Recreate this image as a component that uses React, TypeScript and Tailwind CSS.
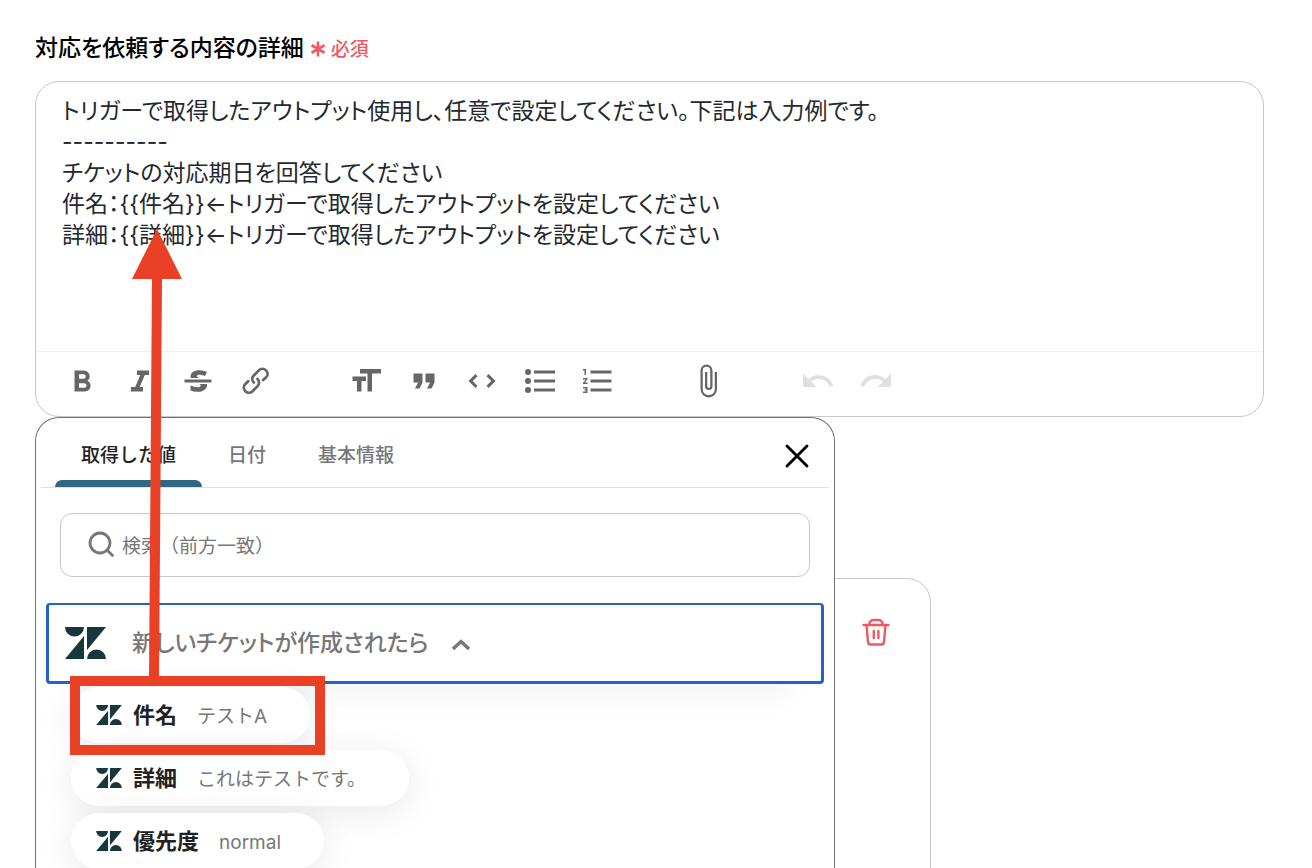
import type { ReactNode } from 'react';
import { X } from 'lucide-react';

interface IconProps {
  className?: string;
}

interface ToolbarItem {
  label: string;
  path: string;
  disabled?: boolean;
}

const toolbarGroups: ToolbarItem[][] = [
  [
    {
      label: '太字',
      path: 'M15.6 11.8c1-.7 1.6-1.8 1.6-2.8a4 4 0 0 0-4-4H7v14h7c2.1 0 3.7-1.7 3.7-3.8 0-1.5-.8-2.8-2.1-3.4zM10 7.5h3a1.5 1.5 0 1 1 0 3h-3v-3zm3.5 9H10v-3h3.5a1.5 1.5 0 1 1 0 3z',
    },
    { label: '斜体', path: 'M10 5v3h2.2l-3.4 8H6v3h8v-3h-2.2l3.4-8H18V5h-8z' },
    {
      label: '取り消し線',
      path: 'M12.73 14l.28.14c.26.15.45.3.57.44.12.14.18.3.18.5 0 .3-.15.56-.44.75-.3.2-.76.3-1.39.3A13.52 13.52 0 0 1 7 14.95v3.37a10.64 10.64 0 0 0 4.84.88c1.26 0 2.35-.19 3.28-.56.93-.37 1.64-.9 2.14-1.57s.74-1.45.74-2.32c0-.26-.02-.51-.06-.75h-5.21zm-5.5-4c-.08-.34-.12-.7-.12-1.1 0-1.29.52-2.3 1.58-3.02 1.05-.72 2.5-1.08 4.34-1.08 1.62 0 3.28.34 4.97 1l-1.3 2.93c-1.47-.6-2.73-.9-3.8-.9-.55 0-.96.08-1.2.26-.26.17-.38.38-.38.64 0 .27.16.52.48.74.17.12.53.3 1.05.53H7.23zM3 13h18v-2H3v2z',
    },
    {
      label: 'リンク',
      path: 'M9.88 13.7a4.3 4.3 0 0 1 0-6.07l3.37-3.37a4.26 4.26 0 0 1 6.07 0 4.3 4.3 0 0 1 0 6.06l-1.96 1.72a.91.91 0 1 1-1.3-1.3l1.97-1.71a2.46 2.46 0 0 0-3.48-3.48l-3.38 3.37a2.46 2.46 0 0 0 0 3.48.91.91 0 1 1-1.3 1.3zM4.25 19.46a4.3 4.3 0 0 1 0-6.07l1.93-1.9a.91.91 0 1 1 1.3 1.3l-1.93 1.9a2.46 2.46 0 0 0 3.48 3.48l3.37-3.38c.96-.96.96-2.52 0-3.48a.91.91 0 1 1 1.3-1.3 4.3 4.3 0 0 1 0 6.07l-3.38 3.38a4.26 4.26 0 0 1-6.07 0z',
    },
  ],
  [
    { label: '見出し', path: 'M12 9v3H9v7H6v-7H3V9h9zM8 4h14v3h-6v12h-3V7H8V4z' },
    { label: '引用', path: 'M6 17h3l2-4V7H5v6h3zm8 0h3l2-4V7h-6v6h3z' },
    {
      label: 'コード',
      path: 'M18.2 12L15 15.2l1.4 1.4L21 12l-4.6-4.6L15 8.8l3.2 3.2zM5.8 12L9 8.8 7.6 7.4 3 12l4.6 4.6L9 15.2 5.8 12z',
    },
    {
      label: '箇条書き',
      path: 'M4 4a2 2 0 1 0 0 4 2 2 0 0 0 0-4zm0 6a2 2 0 1 0 0 4 2 2 0 0 0 0-4zm0 6a2 2 0 1 0 0 4 2 2 0 0 0 0-4zm4 3h14v-2H8v2zm0-6h14v-2H8v2zm0-8v2h14V5H8z',
    },
    {
      label: '番号付きリスト',
      path: 'M2 17h2v.5H3v1h1v.5H2v1h3v-4H2v1zm1-9h1V4H2v1h1v3zm-1 3h1.8L2 13.1v.9h3v-1H3.2L5 10.9V10H2v1zm5-6v2h14V5H7zm0 14h14v-2H7v2zm0-6h14v-2H7v2z',
    },
  ],
  [
    {
      label: 'ファイルを添付',
      path: 'M16.5 6v11.5a4 4 0 1 1-8 0V5a2.5 2.5 0 0 1 5 0v10.5a1 1 0 1 1-2 0V6H10v9.5a2.5 2.5 0 0 0 5 0V5a4 4 0 1 0-8 0v12.5a5.5 5.5 0 0 0 11 0V6h-1.5z',
    },
  ],
  [
    {
      label: '元に戻す',
      path: 'M12.5 8c-2.6 0-5 1-6.9 2.6L2 7v9h9l-3.6-3.6A8 8 0 0 1 20 16l2.4-.8a10.5 10.5 0 0 0-10-7.2z',
      disabled: true,
    },
    {
      label: 'やり直す',
      path: 'M18.4 10.6a10.5 10.5 0 0 0-16.9 4.6L4 16a8 8 0 0 1 12.7-3.6L13 16h9V7l-3.6 3.6z',
      disabled: true,
    },
  ],
];

const tabs = ['取得した値', '日付', '基本情報'];

const outputs = [
  { name: '件名', value: 'テストA' },
  { name: '詳細', value: 'これはテストです。' },
  { name: '優先度', value: 'normal' },
];

const detailText = `トリガーで取得したアウトプット使用し、任意で設定してください。下記は入力例です。
----------
チケットの対応期日を回答してください
件名：{{件名}}←トリガーで取得したアウトプットを設定してください
詳細：{{詳細}}←トリガーで取得したアウトプットを設定してください`;

const ZendeskIcon = ({ className }: IconProps) => (
  <svg viewBox="0 0 41 32" fill="#17373d" className={className} aria-hidden="true">
    <path d="M0 0h19a9.5 9.5 0 0 1-19 0zM19 9v23H0zM22 0h19L22 23zM22 32a9.5 9.5 0 0 1 19 0z" />
  </svg>
);

const TrashIcon = ({ className }: IconProps) => (
  <svg
    viewBox="0 0 28 28"
    fill="none"
    stroke="#ee5a62"
    strokeWidth="2.4"
    strokeLinecap="round"
    strokeLinejoin="round"
    className={className}
    aria-hidden="true">
    <path d="M1.5 7h25M7 7c.5-3 2-5 4.5-5h5c2.5 0 4 2 4.5 5M4.5 7l1.5 17q.3 2.5 2.7 2.5h10.6q2.4 0 2.7-2.5l1.5-17M11.8 13v7M16.4 13v7" />
  </svg>
);

const ToolbarButton = ({ label, path, disabled }: ToolbarItem) => (
  <button
    type="button"
    aria-label={label}
    disabled={disabled}
    className="flex h-12 w-[58px] items-center justify-center text-[#666] disabled:text-[#e0e0e0]">
    <svg viewBox="0 0 24 24" fill="currentColor" className="size-9" aria-hidden="true">
      <path d={path} />
    </svg>
  </button>
);

const Editor = () => (
  <div className="rounded-3xl border border-[#c8c8c8]">
    <textarea
      id="detail"
      defaultValue={detailText}
      className="block h-[269px] w-full resize-none px-[26px] pt-[14px] font-[Inter,'Noto_Sans_CJK_JP',sans-serif] text-[23px] leading-[31px] text-[#24292f] outline-none [font-feature-settings:'palt']"
    />
    <div className="flex gap-[52px] border-t border-[#f0f0f0] px-[17px] pt-[5px] pb-[11px]">
      {toolbarGroups.map((group, i) => (
        <div key={i} className="flex">
          {group.map((item) => (
            <ToolbarButton key={item.label} {...item} />
          ))}
        </div>
      ))}
    </div>
  </div>
);

const Tab = ({ active, children }: { active: boolean; children: ReactNode }) => (
  <button
    type="button"
    role="tab"
    aria-selected={active}
    className="flex flex-col font-medium text-[#777] aria-selected:text-[#222]">
    <span className="flex h-[62px] items-center px-[26px] pt-[10px]">{children}</span>
    {active && <span className="h-[7px] w-full rounded-t-lg bg-[#2f6880]" />}
  </button>
);

const OutputPicker = () => (
  <div className="absolute top-0 left-0 w-[800px] rounded-t-3xl border border-b-0 border-[#707070] bg-white text-[19px]">
    <div className="mx-[5px] flex items-start border-b border-[#e0e0e0] px-[14px]">
      <div role="tablist" className="flex h-[69px]">
        {tabs.map((tab, i) => (
          <Tab key={tab} active={i === 0}>
            {tab}
          </Tab>
        ))}
      </div>
      <button type="button" aria-label="閉じる" className="mt-[18px] -mr-0.5 ml-auto text-black">
        <X className="size-10" strokeWidth={1.7} />
      </button>
    </div>

    <div className="px-6 pt-[25px]">
      <label className="flex h-16 items-center gap-[6px] rounded-xl border border-[#c8c8c8] px-[27px]">
        <svg viewBox="0 0 28 28" fill="none" stroke="#777" strokeWidth="2.8" strokeLinecap="round" className="size-7" aria-hidden="true">
          <circle cx="12" cy="12" r="10" />
          <path d="m19.5 19.5 5 5" />
        </svg>
        <input
          type="text"
          aria-label="検索"
          placeholder="検索（前方一致）"
          className="flex-1 outline-none placeholder:text-[#777]"
        />
      </label>
    </div>

    <div className="px-[10px] pt-[26px] font-[Inter,'Noto_Sans_CJK_JP',sans-serif]">
      <button
        type="button"
        aria-expanded="true"
        className="flex h-[81px] w-full items-center rounded border-3 border-t-2 border-[#2760c8] bg-white px-4 text-[23px] font-medium text-[#777] shadow-[0_40px_30px_-34px_rgba(0,0,0,0.1)]">
        <ZendeskIcon className="h-8 w-[41px]" />
        <span className="ml-[26px] [font-feature-settings:'palt']">新しいチケットが作成されたら</span>
        <svg viewBox="0 0 18 12" fill="none" stroke="currentColor" strokeWidth="3.4" className="mt-1 ml-6 h-3 w-[18px]" aria-hidden="true">
          <path d="m1 10 8-7.5 8 7.5" />
        </svg>
      </button>
      <ul className="flex flex-col items-start gap-[7px] px-[25px] pt-[3px]">
        {outputs.map(({ name, value }) => (
          <li key={name}>
            <button
              type="button"
              className="flex h-14 items-center rounded-full bg-white pr-[43px] pl-[25px] shadow-[0_6px_36px_rgba(0,0,0,0.09)]">
              <ZendeskIcon className="h-5 w-[26px]" />
              <span className="ml-[11px] flex items-baseline gap-5">
                <span className="text-[22px] font-bold text-[#222]">{name}</span>
                <span className="text-[#777]">{value}</span>
              </span>
            </button>
          </li>
        ))}
      </ul>
    </div>
  </div>
);

const Annotation = () => (
  <svg className="pointer-events-none absolute top-0 left-0 h-[868px] w-[400px]" viewBox="0 0 400 868" aria-hidden="true">
    <path d="M157 229l25 50h-20l-3 400h-10l3-400h-20z" fill="#ea4025" />
    <rect x="75" y="681" width="245" height="69" fill="none" stroke="#ea4025" strokeWidth="10" />
  </svg>
);

export default function App() {
  return (
    <main className="relative h-screen overflow-hidden bg-white px-[35px] pt-[29px] pr-12 font-['Noto_Sans_CJK_JP','Noto_Sans',sans-serif]">
      <label htmlFor="detail" className="mb-4 flex items-baseline text-[23px] leading-[34px] font-medium text-black">
        <span className="[font-feature-settings:'palt']">対応を依頼する内容の詳細</span>
        <svg viewBox="0 0 16 16" stroke="#ee5a62" strokeWidth="2.6" className="mt-1 ml-[6px] size-4 self-center" aria-hidden="true">
          <path d="M8 .5v15M1.5 4.25l13 7.5M14.5 4.25l-13 7.5" />
        </svg>
        <span className="ml-[5px] text-[19px] text-[#ee5a62]">必須</span>
      </label>

      <Editor />

      <div className="relative pt-[161px]">
        <div className="flex h-[600px] w-[896px] items-start justify-end rounded-3xl border border-[#c8c8c8] px-10 pt-[39px]">
          <button type="button" aria-label="削除">
            <TrashIcon className="size-7" />
          </button>
        </div>
        <OutputPicker />
      </div>

      <Annotation />
    </main>
  );
}
